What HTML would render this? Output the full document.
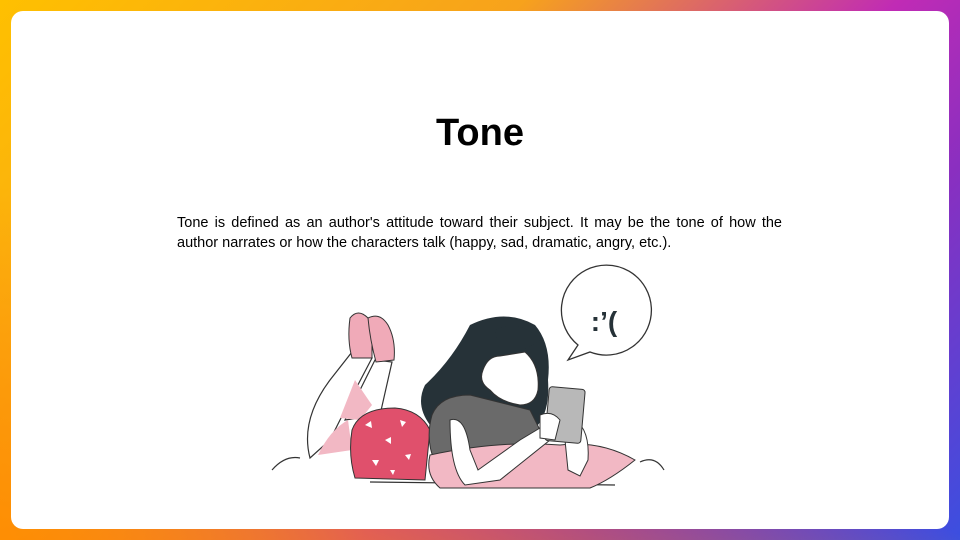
<!DOCTYPE html>
<html><head><style>
html,body{margin:0;padding:0;width:960px;height:540px;overflow:hidden}
body{background:linear-gradient(135deg,#ffc000 0%,#f7a21c 35%,#c02bb5 60%,#8a2fc0 75%,#3b4fe0 100%);position:relative;font-family:"Liberation Sans",sans-serif}
.bg2{position:absolute;inset:0;background:linear-gradient(20deg,rgba(255,140,0,.9) 0%,rgba(255,140,0,0) 40%)}
.card{position:absolute;left:11px;top:11px;width:938px;height:518px;background:#fff;border-radius:12px}
h1{position:absolute;left:0;width:960px;top:112px;margin:0;text-align:center;font-size:38px;font-weight:bold;color:#000}
p{position:absolute;left:177px;top:213px;width:605px;margin:0;font-size:14.5px;line-height:20px;text-align:justify;color:#000;text-align-last:left}
svg{position:absolute;left:0;top:0}
</style></head><body>
<div class="bg2"></div>
<div class="card"></div>
<h1>Tone</h1>
<p>Tone is defined as an author's attitude toward their subject. It may be the tone of how the author narrates or how the characters talk (happy, sad, dramatic, angry, etc.).</p>
<svg width="960" height="540" viewBox="0 0 960 540">
<g stroke="#333" stroke-width="1.2" fill="none">
<path d="M272 470 Q285 455 300 458 M640 462 Q655 455 664 470 M370 482 L615 485"/>
</g>
<path d="M578 345 A45 45 0 1 1 590 352 L568 360 Z" fill="#fff" stroke="#333" stroke-width="1.3"/>
<text x="604" y="331" font-family="Liberation Sans,sans-serif" font-weight="bold" font-size="28" fill="#263238" text-anchor="middle">:’(</text>
<path d="M310 458 Q300 420 330 380 L352 352 L372 358 L350 400 L330 440 Z" fill="#fff" stroke="#333" stroke-width="1.2"/>
<path d="M345 420 L375 360 L392 362 L380 415 Z" fill="#fff" stroke="#333" stroke-width="1.2"/>
<path d="M355 380 Q365 395 372 405 L360 420 L340 418 Z" fill="#f2b8c4"/>
<path d="M318 455 Q330 430 348 420 L352 450 Z" fill="#f2b8c4"/>
<path d="M350 318 Q358 308 368 318 Q375 330 372 345 L372 358 L352 358 Q347 340 350 318Z" fill="#f0aab8" stroke="#333" stroke-width="1"/>
<path d="M368 318 Q380 312 388 325 Q396 340 394 360 L376 362 Q370 340 368 318Z" fill="#f0aab8" stroke="#333" stroke-width="1"/>
<path d="M352 430 Q360 408 395 408 Q420 410 430 430 L425 480 L355 478 Q348 455 352 430Z" fill="#e0506c" stroke="#333" stroke-width="1"/>
<g fill="#fff"><path d="M365 425l6 -4 1 7z M385 440l6-3 0 7z M372 460l7 0-3 6z M400 420l6 2-4 5z M405 455l6-1-2 6z M390 470l5 0-2 5z"/></g>
<path d="M470 325 Q505 308 535 325 Q552 345 548 380 Q550 410 538 425 L430 425 Q415 405 425 385 Q452 360 470 325Z" fill="#263238"/>
<path d="M432 415 Q440 395 470 395 L530 410 L545 440 L520 460 L435 462 Q425 440 432 415Z" fill="#6a6a6a" stroke="#333" stroke-width="1"/>
<path d="M483 370 Q488 356 500 356 L525 352 Q540 365 538 390 Q535 405 520 405 Q500 402 490 390 Q478 382 483 370Z" fill="#fff" stroke="#333" stroke-width="1"/>
<path d="M495 330 Q520 318 540 340 Q525 352 500 354Z" fill="#263238"/>
<path d="M430 455 Q500 440 560 445 Q600 440 635 460 Q610 480 590 488 L440 488 Q425 475 430 455Z" fill="#f2b8c4" stroke="#333" stroke-width="1"/>
<path d="M450 420 Q465 415 470 450 L478 470 L520 440 L540 428 L550 440 L500 480 L465 485 Q450 470 450 420Z" fill="#fff" stroke="#333" stroke-width="1"/>
<path d="M575 420 Q590 430 588 460 L580 476 L568 470 L565 440 Z" fill="#fff" stroke="#333" stroke-width="1"/>
<rect x="547" y="388" width="36" height="54" rx="3" fill="#b8b8b8" stroke="#333" stroke-width="1" transform="rotate(5 565 415)"/>
<path d="M540 415 Q552 410 560 420 L555 440 L540 438Z" fill="#fff" stroke="#333" stroke-width="1"/>
</svg>
</body></html>
